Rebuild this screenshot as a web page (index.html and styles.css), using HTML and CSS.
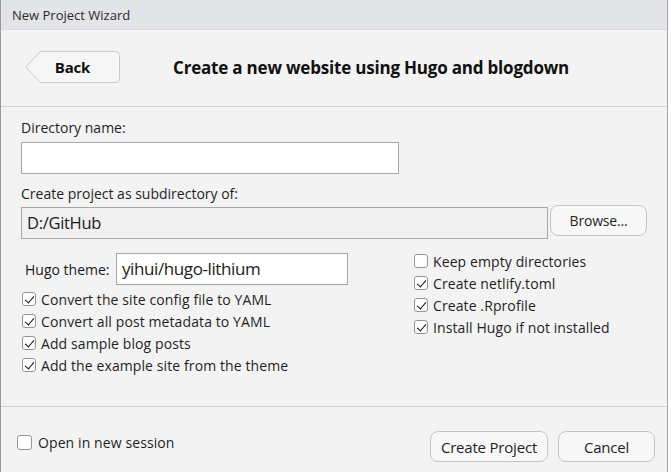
FILE: index.html
```html
<!DOCTYPE html>
<html>
<head>
<meta charset="utf-8">
<link rel="stylesheet" href="styles.css">
</head>
<body>
<div class="window">
  <div class="titlebar">New Project Wizard</div>
  <div class="header">
    <button class="back">
      <svg class="back-shape" width="95" height="32" viewBox="0 0 95 32">
        <path d="M15.5 0.5 H90.5 A4 4 0 0 1 94.5 4.5 V27.5 A4 4 0 0 1 90.5 31.5 H15.5 L0.8 16 Z" fill="#f6f6f6" stroke="#c9c9c9"/>
      </svg>
      <span class="back-label">Back</span>
    </button>
    <h1 class="heading">Create a new website using Hugo and blogdown</h1>
  </div>
  <div class="form">
    <label class="label">Directory name:</label>
    <div class="input dirname"></div>
    <label class="label sub">Create project as subdirectory of:</label>
    <div class="pathrow">
      <div class="input path">D:/GitHub</div>
      <button class="btn browse">Browse...</button>
    </div>
    <div class="options">
      <div class="col left">
        <div class="themerow">
          <span class="themelabel">Hugo theme:</span>
          <div class="input theme">yihui/hugo-lithium</div>
        </div>
        <div class="check"><span class="box on"></span>Convert the site config file to YAML</div>
        <div class="check"><span class="box on"></span>Convert all post metadata to YAML</div>
        <div class="check"><span class="box on"></span>Add sample blog posts</div>
        <div class="check"><span class="box on"></span>Add the example site from the theme</div>
      </div>
      <div class="col right">
        <div class="check"><span class="box"></span>Keep empty directories</div>
        <div class="check"><span class="box on"></span>Create netlify.toml</div>
        <div class="check"><span class="box on"></span>Create .Rprofile</div>
        <div class="check"><span class="box on"></span>Install Hugo if not installed</div>
      </div>
    </div>
  </div>
  <div class="footer">
    <div class="check session"><span class="box"></span>Open in new session</div>
    <div class="actions">
      <button class="btn create">Create Project</button>
      <button class="btn cancel">Cancel</button>
    </div>
  </div>
</div>
</body>
</html>
```
FILE: styles.css
```css
* { box-sizing: border-box; }
html, body { margin: 0; padding: 0; }
body {
  width: 671px;
  height: 472px;
  overflow: hidden;
  background: #fbfbfb;
  font-family: "Open Sans", "Noto Sans", sans-serif;
  color: #1a1a1a;
}
.window {
  width: 668px;
  height: 472px;
  background: #f3f3f3;
  border-left: 1px solid #9a9a9a;
  border-right: 1px solid #a8a8a8;
  display: flex;
  flex-direction: column;
}
.titlebar {
  height: 30px;
  background: #e3e4e7;
  border-bottom: 1px solid #dadbde;
  font-size: 13px;
  line-height: 30px;
  padding-left: 11px;
  color: #2a2a2a;
}
.header {
  height: 77px;
  border-bottom: 1px solid #d2d2d2;
  display: flex;
  align-items: center;
  padding: 0 0 2px 24px;
}
.back {
  position: relative;
  width: 95px;
  height: 32px;
  border: 0;
  padding: 0;
  background: none;
  font: inherit;
}
.back-shape { position: absolute; left: 0; top: 0; }
.back-label {
  position: relative;
  display: block;
  text-align: center;
  font-weight: 700;
  font-size: 15px;
  line-height: 32px;
  color: #111;
  letter-spacing: -0.2px;
}
.heading {
  margin: 0 0 0 53px;
  font-size: 17px;
  font-weight: 700;
  color: #111;
  letter-spacing: -0.2px;
}
.form {
  padding: 12px 20px 0 20px;
  height: 300px;
  border-bottom: 1px solid #d2d2d2;
}
.label {
  display: block;
  font-size: 14px;
  line-height: 18px;
  color: #1f1f1f;
}
.input {
  border: 1px solid #a7a7a7;
  background: #fff;
  height: 32px;
}
.dirname { width: 378px; margin-top: 5px; }
.sub { margin-top: 11px; }
.pathrow {
  display: flex;
  align-items: flex-start;
  gap: 2px;
  margin-top: 4px;
}
.path {
  width: 527px;
  background: #f0f0f0;
  font-size: 16.5px;
  line-height: 30px;
  padding-left: 5px;
  letter-spacing: -0.3px;
}
.btn {
  font: inherit;
  font-size: 14px;
  color: #1f1f1f;
  background: #f7f7f7;
  border: 1px solid #c4c4c4;
  border-radius: 8px;
  letter-spacing: -0.2px;
}
.browse { width: 97px; height: 31px; margin-top: -2px; }
.options {
  display: flex;
  margin-top: 14px;
}
.col { display: flex; flex-direction: column; }
.left { width: 393px; }
.themerow {
  display: flex;
  align-items: center;
  margin-left: 4px;
  margin-bottom: 3px;
}
.themelabel {
  font-size: 14px;
  width: 91px;
}
.theme {
  width: 232px;
  font-size: 17px;
  line-height: 30px;
  padding-left: 5px;
  letter-spacing: -0.4px;
  color: #1a1a1a;
}
.check {
  display: flex;
  align-items: center;
  height: 22px;
  font-size: 14px;
  letter-spacing: 0.1px;
  color: #1f1f1f;
}
.left .check { margin-left: 1px; }
.right .check:first-child { margin-top: -3px; }
.box {
  width: 14px;
  height: 14px;
  border: 1px solid #959595;
  border-radius: 3px;
  background: #fff;
  margin-right: 5px;
  flex: none;
  position: relative;
}
.box.on::after {
  content: "";
  position: absolute;
  left: 4px;
  top: 1px;
  width: 4px;
  height: 8px;
  border-right: 1.6px solid #111;
  border-bottom: 1.6px solid #111;
  transform: rotate(40deg);
}
.footer {
  flex: 1;
  display: flex;
  align-items: flex-start;
  justify-content: space-between;
  padding: 24px 12px 0 16px;
}
.session .box { margin-right: 6px; width: 15px; height: 15px; }
.actions { display: flex; gap: 10px; }
.create { width: 118px; height: 31px; font-size: 15px; }
.cancel { width: 97px; height: 31px; font-size: 15px; }
```
